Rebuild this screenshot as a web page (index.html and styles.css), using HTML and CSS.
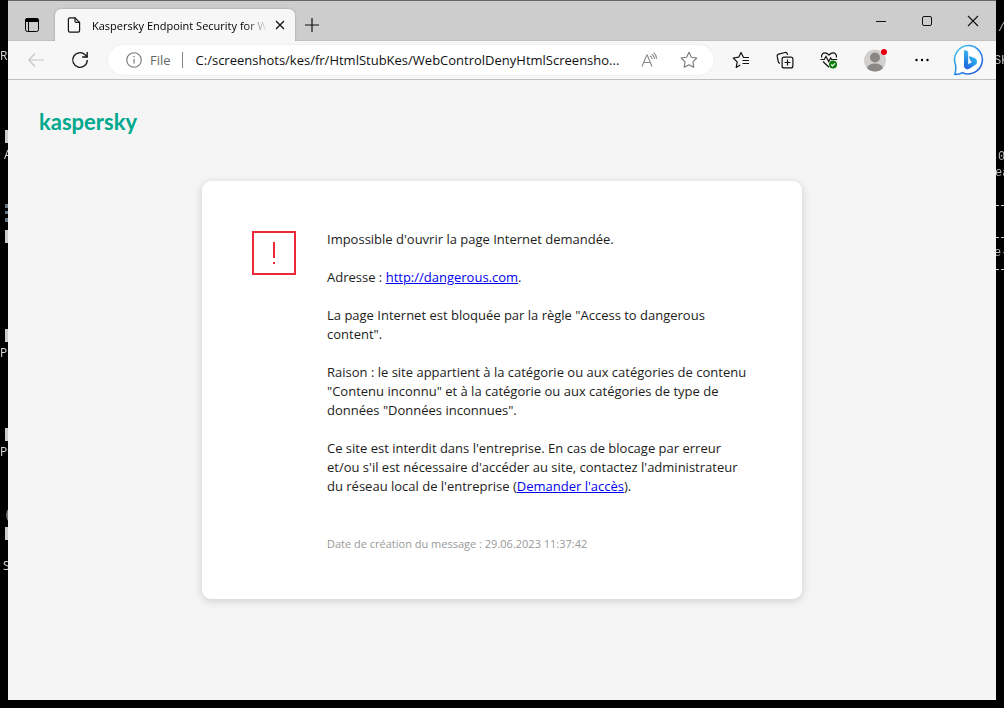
FILE: index.html
```html
<!DOCTYPE html>
<html lang="fr">
<head>
  <meta charset="UTF-8" />
  <meta name="viewport" content="width=device-width, initial-scale=1.0"/>
  <title>Kaspersky Endpoint Security for Windows</title>
  <link rel="stylesheet" href="styles.css">
</head>
<body>
  <!-- Desktop items that show around the window -->
  <div class="desktop" aria-hidden="true">
    <span class="label label-r">Re</span>
    <span class="label label-a">A</span>
    <span class="label label-p1">P</span>
    <span class="label label-p2">P</span>
    <span class="label label-s">S</span>
    <i class="shortcut shortcut-1"></i>
    <i class="shortcut shortcut-2"></i>
    <i class="shortcut shortcut-3"></i>
    <i class="shortcut shortcut-4"></i>
    <i class="shortcut shortcut-5"></i>
    <i class="gear"></i>
    <i class="disc"></i>
    <span class="console console-1">/1</span>
    <span class="console console-2">SK</span>
    <span class="console console-3">0</span>
    <span class="console console-4">ea</span>
    <span class="console console-5">t |</span>
    <span class="console console-6">e-</span>
    <i class="dash dash-1"></i>
    <i class="dash dash-2"></i>
    <i class="dash dash-3"></i>
  </div>

  <div class="window">
    <div class="titlebar">
      <button class="tab-menu" aria-label="Tab actions">
        <svg width="16" height="16" viewBox="0 0 16 16"><rect x="1.5" y="1.5" width="13" height="13" rx="2" fill="none" stroke="#000"/><path d="M1 3.5a2.500 2.500 0 0 1 2.500-2.500h9a2.500 2.500 0 0 1 2.500 2.500V5H1z"/><path d="M4.500 5v9.500" stroke="#000"/></svg>
      </button>
      <div class="tab">
        <svg width="14" height="16" viewBox="0 0 14 16" fill="none" stroke="#111" stroke-width="1.200"><path d="M8 .8H3A1.600 1.600 0 0 0 1.400 2.400v11.200A1.600 1.600 0 0 0 3 15.200h8a1.600 1.600 0 0 0 1.600-1.600V5.400z"/><path d="M8 .8v3.400a1.200 1.200 0 0 0 1.200 1.200h3.400"/></svg>
        <span class="tab-title">Kaspersky Endpoint Security for Windows</span>
        <button class="tab-close" aria-label="Close tab">
          <svg width="10" height="10" viewBox="0 0 10 10"><path d="M1 1l8 8M9 1L1 9" stroke="#111" stroke-width="1.300"/></svg>
        </button>
      </div>
      <button class="new-tab" aria-label="New tab">
        <svg width="14" height="14" viewBox="0 0 14 14"><path d="M7 0v14M0 7h14" stroke="#111" stroke-width="1.200"/></svg>
      </button>
      <div class="window-buttons">
        <button aria-label="Minimize"><svg width="12" height="12" viewBox="0 0 12 12"><path d="M1 6.500h10" stroke="#111"/></svg></button>
        <button aria-label="Maximize"><svg width="12" height="12" viewBox="0 0 12 12"><rect x="1.500" y="1.500" width="9" height="9" rx="1.500" fill="none" stroke="#111"/></svg></button>
        <button aria-label="Close"><svg width="12" height="12" viewBox="0 0 12 12"><path d="M1 1l10 10M11 1L1 11" stroke="#111" stroke-width="1.100"/></svg></button>
      </div>
    </div>

    <div class="toolbar">
      <button aria-label="Back" disabled>
        <svg width="16" height="14" viewBox="0 0 16 14" fill="none" stroke="#c6c6c6" stroke-width="1.200"><path d="M7 .5L.8 7 7 13.500M.8 7H16"/></svg>
      </button>
      <button aria-label="Refresh">
        <svg width="18" height="18" viewBox="0 0 18 18" fill="none" stroke="#111" stroke-width="1.300"><path d="M16.300 9a7.300 7.300 0 1 1-2.200-5.200L16 5.800"/><path d="M16.200 1v5h-5"/></svg>
      </button>
      <div class="address">
        <svg width="16" height="16" viewBox="0 0 16 16"><circle cx="8" cy="8" r="7.300" fill="none" stroke="#777" stroke-width="1.100"/><path d="M8 7v4.500" stroke="#777" stroke-width="1.200"/><circle cx="8" cy="4.700" r=".8" fill="#777"/></svg>
        <label class="scheme" for="url">File</label>
        <input type="text" id="url" value="C:/screenshots/kes/fr/HtmlStubKes/WebControlDenyHtmlScreensho...">
        <button aria-label="Read aloud">
          <svg width="18" height="16" viewBox="0 0 18 16" fill="none" stroke="#888" stroke-width="1.100"><path d="M1 14.500L5.800 3h.4L11 14.500M2.800 10.500h6.400"/><path d="M9 4q1.800.8 2.300 3M10.800 2.200q2.400 1.400 2.900 4.800M12.600.6q2.800 2 3.200 6.200"/></svg>
        </button>
        <button aria-label="Add to favorites">
          <svg width="18" height="18" viewBox="0 0 18 18" fill="none" stroke="#777" stroke-width="1.100" stroke-linejoin="round"><path d="M9 1.300l2.400 4.900 5.400.8-3.900 3.800.9 5.400L9 13.700l-4.800 2.500.9-5.400L1.200 7l5.400-.8z"/></svg>
        </button>
      </div>
      <button aria-label="Favorites">
        <svg width="18" height="18" viewBox="0 0 18 18" fill="none" stroke="#111" stroke-width="1.200" stroke-linejoin="round"><path d="M17 6.500h-5.500L9 1.500 6.700 6.200l-5.500.8 4 3.900-1 5.500 4-2.300M10.500 9.500h6.500M10.500 12.500h6.500"/></svg>
      </button>
      <button aria-label="Collections">
        <svg width="18" height="18" viewBox="0 0 18 18" fill="none" stroke="#111" stroke-width="1.200"><path d="M3.900 12.300A2 2 0 0 1 2.300 10.700L1.200 5.400a2 2 0 0 1 1.500-2.300l6.300-1.600a2 2 0 0 1 2.300 1.500l.3.900"/><rect x="6.100" y="6.100" width="10.800" height="10.800" rx="2"/><path d="M11.500 8.500v6M8.500 11.500h6"/></svg>
      </button>
      <button aria-label="Browser essentials">
        <svg width="18" height="18" viewBox="0 0 18 18" fill="none" stroke="#111" stroke-width="1.200"><path d="M1.600 6.500C1 3.500 3 1.800 5 1.800 7 1.800 8 3 9 4c1-1 2-2.200 4-2.200s4 1.700 3.400 4.700"/><path d="M.5 8.500h3.700l1.800-3 2.700 5 2-3.500 1 1.500h5.500M3 10.500l6 5.800"/><circle cx="13" cy="13.500" r="4" fill="#107c10" stroke="none"/><path d="M11.200 13.500l1.300 1.300 2.400-2.500" stroke="#fff"/></svg>
      </button>
      <button class="wide" aria-label="Profile">
        <svg width="24" height="24" viewBox="0 0 24 24"><defs><clipPath id="face"><circle cx="12" cy="12.500" r="11"/></clipPath></defs><circle cx="12" cy="12.500" r="11" fill="#d2d0ce"/><g clip-path="url(#face)" fill="#8a8886"><circle cx="12" cy="9.500" r="5"/><ellipse cx="12" cy="20.500" rx="8" ry="5"/></g><circle cx="21" cy="4" r="3" fill="#e80011"/></svg>
      </button>
      <button class="wide" aria-label="Settings">
        <svg width="14" height="4" viewBox="0 0 14 4"><circle cx="1.500" cy="2" r="1.200"/><circle cx="7" cy="2" r="1.200"/><circle cx="12.500" cy="2" r="1.200"/></svg>
      </button>
      <button class="wide" aria-label="Bing">
        <svg width="32" height="32" viewBox="0 0 32 32"><defs><linearGradient id="ring" x1="0" y1="0" x2="1" y2="1"><stop offset="0" stop-color="#37c6f0"/><stop offset=".5" stop-color="#2c8de8"/><stop offset="1" stop-color="#2450d8"/></linearGradient><linearGradient id="b" x1="0" y1="0" x2="0" y2="1"><stop offset="0" stop-color="#3fb4f4"/><stop offset="1" stop-color="#1766d6"/></linearGradient><linearGradient id="b2" x1="0" y1="1" x2="1" y2="0"><stop offset="0" stop-color="#2355dc"/><stop offset="1" stop-color="#2bc4f4"/></linearGradient></defs><path d="M16 1.500A14.200 14.200 0 1 1 9.500 28.700C7 30 4 30.500 1.700 30.300 2.800 28 3 24.500 2.600 21A14.200 14.200 0 0 1 16 1.500z" fill="#fff" stroke="url(#ring)" stroke-width="1.600"/><path d="M11 7q0-1.200 1.200-.8l2 .8q1 .4 1 1.500v12L11 23z" fill="url(#b)"/><path d="M11 22l4.200-1.800 4-2.200-1.500-.8-1.700-4.200q-.2-1 .8-.8l4.700 1.800c2 1 2.700 2.400 2.500 4.200-.2 1.400-1.200 2.400-2.300 3l-5 3.300c-2.500 1.500-5.700.3-5.700-2.500z" fill="url(#b2)"/></svg>
      </button>
    </div>

    <main class="page">
      <div class="logo">kaspersky</div>
      <section class="card">
        <svg class="alert" width="44" height="44" viewBox="0 0 44 44"><rect x="1" y="1" width="42" height="42" fill="none" stroke="#eb2939" stroke-width="2"/><path d="M21 11h2v16h-2zM21 31h2v2h-2z" fill="#eb2939"/></svg>
        <div class="message">
          <p>Impossible d'ouvrir la page Internet demandée.</p>
          <p>Adresse : <a href="http://dangerous.com">http://dangerous.com</a>.</p>
          <p>La page Internet est bloquée par la règle "Access to dangerous content".</p>
          <p>Raison : le site appartient à la catégorie ou aux catégories de contenu "Contenu inconnu" et à la catégorie ou aux catégories de type de données "Données inconnues".</p>
          <p>Ce site est interdit dans l'entreprise. En cas de blocage par erreur et/ou s'il est nécessaire d'accéder au site, contactez l'administrateur du réseau local de l'entreprise (<a href="#">Demander l'accès</a>).</p>
          <p class="date">Date de création du message : 29.06.2023 11:37:42</p>
        </div>
      </section>
    </main>
  </div>
</body>
</html>
```
FILE: styles.css
```css
* {
  box-sizing: border-box;
}

body {
  margin: 0;
  padding: 0 8px 8px;
  min-height: 100vh;
  display: flex;
  background-color: #000;
  color: #1d1d1b;
  font-family: "Open Sans", "Segoe UI", sans-serif;
  font-size: 13px;
}

button {
  display: flex;
  align-items: center;
  justify-content: center;
  padding: 0;
  border: none;
  background: none;
}

/* Desktop behind the window */
.desktop {
  position: fixed;
  inset: 0;
  overflow: hidden;
  color: #ddd;
}

.desktop > * {
  position: absolute;
}

.label {
  font-size: 12px;
  line-height: 16px;
}

.label-r { left: 0; top: 48px; }
.label-a { left: 4px; top: 147px; }
.label-p1 { left: 0; top: 345px; }
.label-p2 { left: 0; top: 444px; }
.label-s { left: 3px; top: 558px; }

.shortcut {
  left: 5px;
  width: 12px;
  height: 13px;
  background-color: #ccc;
}

.shortcut-1 { top: 130px; }
.shortcut-2 { top: 230px; }
.shortcut-3 { top: 329px; }
.shortcut-4 { top: 428px; }
.shortcut-5 { top: 527px; }

.gear {
  left: 5px;
  top: 204px;
  width: 12px;
  height: 18px;
  border-left: 3px dotted #678;
}

.disc {
  left: 6px;
  top: 505px;
  width: 20px;
  height: 20px;
  border-radius: 50%;
  background-color: #777;
}

.console {
  font-family: "Liberation Mono", monospace;
  font-size: 12px;
  line-height: 16px;
  color: #bbb;
  white-space: pre;
}

.console-1 { left: 998px; top: 20px; }
.console-2 { left: 994px; top: 53px; }
.console-3 { left: 998px; top: 149px; }
.console-4 { left: 995px; top: 165px; }
.console-5 { left: 990px; top: 212px; }
.console-6 { left: 994px; top: 245px; }

.dash {
  left: 996px;
  width: 8px;
  border-top: 1px dashed #ccc;
}

.dash-1 { top: 205px; }
.dash-2 { top: 237px; }
.dash-3 { top: 269px; }

/* Browser window */
.window {
  position: relative;
  flex: 1;
  min-width: 0;
  display: flex;
  flex-direction: column;
  background-color: #f5f5f5;
}

.titlebar {
  display: flex;
  height: 41px;
  border-top: 1px solid #666;
  background-color: #cdcdcd;
  box-shadow: inset 0 -1px #c0c0c0;
}

.tab-menu {
  width: 47px;
  padding-top: 8px;
}

.tab {
  display: flex;
  align-items: center;
  gap: 11px;
  width: 240px;
  margin-top: 8px;
  padding: 0 10px 0 12px;
  border-radius: 6px 6px 0 0;
  background-color: #f7f7f7;
  box-shadow: 0 0 2px rgba(0, 0, 0, 0.3);
  clip-path: inset(-3px -3px 0 -3px);
}

.tab-title {
  flex: 1;
  overflow: hidden;
  white-space: nowrap;
  font-size: 11px;
  color: #000;
  mask-image: linear-gradient(to right, #000 88%, transparent);
}

.tab-close {
  margin-left: -3px;
}

.new-tab {
  width: 34px;
  padding-top: 8px;
}

.window-buttons {
  display: flex;
  margin-left: auto;
}

.window-buttons button {
  width: 46px;
}

.toolbar {
  display: flex;
  align-items: center;
  height: 39px;
  padding: 0 4px 0 6px;
  border-bottom: 1px solid #bfbfbf;
  background-color: #f7f7f7;
}

.toolbar > button {
  width: 44px;
  height: 32px;
}

.toolbar > .wide {
  width: 47px;
}

.address {
  display: flex;
  align-items: center;
  flex: 1;
  min-width: 0;
  height: 30px;
  margin: 0 5px 0 6px;
  padding: 0 16px 0 18px;
  border-radius: 15px;
  background-color: #fff;
  box-shadow: 0 0 2px rgba(0, 0, 0, 0.1);
}

.scheme {
  margin-left: 8px;
  padding-right: 11px;
  border-right: 1px solid #888;
  line-height: 16px;
  color: #666;
}

.address input {
  flex: 1;
  min-width: 0;
  margin-left: 13px;
  padding: 0;
  border: none;
  outline: none;
  background: none;
  font: inherit;
  color: #111;
}

.address button {
  margin-left: 14px;
}

.address button + button {
  margin-left: 21px;
}

/* Blocked page message */
.page {
  flex: 1;
  padding: 28px 31px 40px;
}

.logo {
  font-family: Lato, sans-serif;
  font-size: 22px;
  font-weight: 700;
  line-height: 28px;
  color: #00a88e;
}

.card {
  display: flex;
  gap: 31px;
  max-width: 600px;
  margin: 45px auto 0;
  padding: 49px 54px 46px 50px;
  border-radius: 9px;
  background-color: #fff;
  box-shadow: 0 2px 10px rgba(0, 0, 0, 0.16);
}

.alert {
  flex: none;
  margin-top: 1px;
}

.message {
  line-height: 19px;
}

.message p {
  margin: 0 0 19px;
}

.message a {
  color: #0000ee;
}

.message .date {
  margin: 39px 0 0;
  font-size: 11px;
  line-height: 18px;
  color: #999;
}
```
